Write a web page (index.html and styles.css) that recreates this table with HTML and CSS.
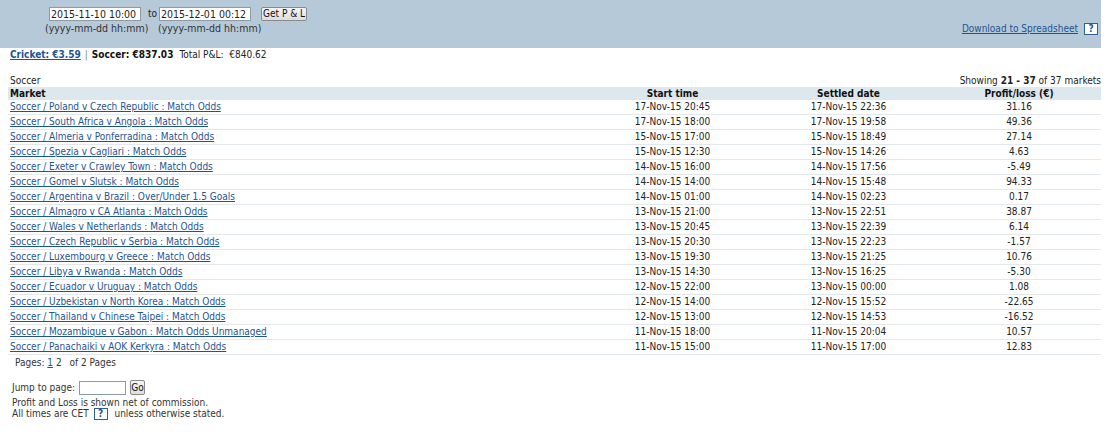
FILE: index.html
```html
<!DOCTYPE html>
<html>
<head>
<meta charset="utf-8">
<link rel="stylesheet" href="styles.css">
</head>
<body>
<div class="page">
  <div class="band">
    <div class="dates">
      <div class="datecol col-from">
        <input class="dt" type="text" value="2015-11-10 10:00">
        <span class="hint">(yyyy-mm-dd hh:mm)</span>
      </div>
      <span class="to">to</span>
      <div class="datecol col-to">
        <input class="dt" type="text" value="2015-12-01 00:12">
        <span class="hint">(yyyy-mm-dd hh:mm)</span>
      </div>
      <button class="btn getpl" type="button">Get P &amp; L</button>
    </div>
    <div class="download">
      <a href="#" class="lnk">Download to Spreadsheet</a>
      <span class="help">?</span>
    </div>
  </div>

  <div class="totals">
    <a href="#" class="lnk strong">Cricket: €3.59</a>
    <span class="sep">|</span>
    <b class="strong">Soccer: €837.03</b>
    <span class="total">Total P&amp;L:&nbsp; €840.62</span>
  </div>

  <div class="caption">
    <span>Soccer</span>
    <span>Showing <b>21 - 37</b> of 37 markets</span>
  </div>

  <table class="grid">
    <colgroup>
      <col class="c-market">
      <col class="c-start">
      <col class="c-settled">
      <col class="c-pl">
    </colgroup>
    <thead>
      <tr>
        <th class="left">Market</th>
        <th>Start time</th>
        <th>Settled date</th>
        <th>Profit/loss (€)</th>
      </tr>
    </thead>
    <tbody>
      <tr><td class="left"><a href="#" class="lnk">Soccer / Poland v Czech Republic : Match Odds</a></td><td>17-Nov-15 20:45</td><td>17-Nov-15 22:36</td><td>31.16</td></tr>
      <tr><td class="left"><a href="#" class="lnk">Soccer / South Africa v Angola : Match Odds</a></td><td>17-Nov-15 18:00</td><td>17-Nov-15 19:58</td><td>49.36</td></tr>
      <tr><td class="left"><a href="#" class="lnk">Soccer / Almeria v Ponferradina : Match Odds</a></td><td>15-Nov-15 17:00</td><td>15-Nov-15 18:49</td><td>27.14</td></tr>
      <tr><td class="left"><a href="#" class="lnk">Soccer / Spezia v Cagliari : Match Odds</a></td><td>15-Nov-15 12:30</td><td>15-Nov-15 14:26</td><td>4.63</td></tr>
      <tr><td class="left"><a href="#" class="lnk">Soccer / Exeter v Crawley Town : Match Odds</a></td><td>14-Nov-15 16:00</td><td>14-Nov-15 17:56</td><td>-5.49</td></tr>
      <tr><td class="left"><a href="#" class="lnk">Soccer / Gomel v Slutsk : Match Odds</a></td><td>14-Nov-15 14:00</td><td>14-Nov-15 15:48</td><td>94.33</td></tr>
      <tr><td class="left"><a href="#" class="lnk">Soccer / Argentina v Brazil : Over/Under 1.5 Goals</a></td><td>14-Nov-15 01:00</td><td>14-Nov-15 02:23</td><td>0.17</td></tr>
      <tr><td class="left"><a href="#" class="lnk">Soccer / Almagro v CA Atlanta : Match Odds</a></td><td>13-Nov-15 21:00</td><td>13-Nov-15 22:51</td><td>38.87</td></tr>
      <tr><td class="left"><a href="#" class="lnk">Soccer / Wales v Netherlands : Match Odds</a></td><td>13-Nov-15 20:45</td><td>13-Nov-15 22:39</td><td>6.14</td></tr>
      <tr><td class="left"><a href="#" class="lnk">Soccer / Czech Republic v Serbia : Match Odds</a></td><td>13-Nov-15 20:30</td><td>13-Nov-15 22:23</td><td>-1.57</td></tr>
      <tr><td class="left"><a href="#" class="lnk">Soccer / Luxembourg v Greece : Match Odds</a></td><td>13-Nov-15 19:30</td><td>13-Nov-15 21:25</td><td>10.76</td></tr>
      <tr><td class="left"><a href="#" class="lnk">Soccer / Libya v Rwanda : Match Odds</a></td><td>13-Nov-15 14:30</td><td>13-Nov-15 16:25</td><td>-5.30</td></tr>
      <tr><td class="left"><a href="#" class="lnk">Soccer / Ecuador v Uruguay : Match Odds</a></td><td>12-Nov-15 22:00</td><td>13-Nov-15 00:00</td><td>1.08</td></tr>
      <tr><td class="left"><a href="#" class="lnk">Soccer / Uzbekistan v North Korea : Match Odds</a></td><td>12-Nov-15 14:00</td><td>12-Nov-15 15:52</td><td>-22.65</td></tr>
      <tr><td class="left"><a href="#" class="lnk">Soccer / Thailand v Chinese Taipei : Match Odds</a></td><td>12-Nov-15 13:00</td><td>12-Nov-15 14:53</td><td>-16.52</td></tr>
      <tr><td class="left"><a href="#" class="lnk">Soccer / Mozambique v Gabon : Match Odds Unmanaged</a></td><td>11-Nov-15 18:00</td><td>11-Nov-15 20:04</td><td>10.57</td></tr>
      <tr><td class="left"><a href="#" class="lnk">Soccer / Panachaiki v AOK Kerkyra : Match Odds</a></td><td>11-Nov-15 15:00</td><td>11-Nov-15 17:00</td><td>12.83</td></tr>
    </tbody>
  </table>

  <div class="pages">
    Pages: <a href="#" class="lnk">1</a> 2 <span class="of">of 2 Pages</span>
  </div>

  <div class="footer">
    <div class="jump">
      <span>Jump to page:</span>
      <input class="pageinput" type="text">
      <button class="btn go" type="button">Go</button>
    </div>
    <div class="net">Profit and Loss is shown net of commission.</div>
    <div class="cet">All times are CET <span class="help">?</span> unless otherwise stated.</div>
  </div>
</div>
</body>
</html>
```

FILE: styles.css
```css
html, body {
  margin: 0;
  padding: 0;
  background: #ffffff;
}

body {
  font-family: "DejaVu Sans Condensed", "DejaVu Sans", sans-serif;
  font-size: 10px;
  color: #222222;
  white-space: nowrap;
}

.page {
  width: 1101px;
}

.lnk {
  color: #1f5493;
  text-decoration: underline;
}

.band {
  height: 48px;
  background: #b5c9d9;
  display: flex;
  justify-content: space-between;
  box-sizing: border-box;
  padding: 7px 3px 0 45px;
}

.dates {
  display: flex;
  align-items: flex-start;
}

.datecol {
  display: flex;
  flex-direction: column;
  align-items: flex-start;
}

.col-from {
  width: 103px;
}

.col-from .dt {
  margin-left: 4px;
}

.col-to {
  width: 100px;
}

.col-to .dt {
  margin-left: 1px;
}

.dt {
  width: 92px;
  height: 14px;
  box-sizing: border-box;
  border: 1px solid #8e9aa6;
  background: #fff;
  padding: 0 1px;
  margin: 0;
  font-family: inherit;
  font-size: 10.5px;
  color: #222;
  line-height: 12px;
}

.hint {
  margin-top: 1px;
  line-height: 13px;
  font-size: 10.5px;
  color: #333;
}

.to {
  line-height: 14px;
  width: 10px;
  margin: 0 0 0 0;
}

.btn {
  height: 14px;
  box-sizing: border-box;
  border: 1px solid #8a8a8a;
  border-radius: 2px;
  background: linear-gradient(#f4f4f4, #dedede);
  font-family: inherit;
  font-size: 10px;
  color: #111;
  padding: 0 1px;
  margin: 0;
  line-height: 12px;
  white-space: nowrap;
}

.getpl {
  margin-left: 3px;
  width: 46px;
}

.download {
  display: flex;
  align-items: center;
  gap: 6px;
  margin-top: 15px;
  height: 13px;
}

.help {
  display: inline-block;
  box-sizing: border-box;
  width: 14px;
  height: 12px;
  border: 1px solid #2f5f94;
  background: #fff;
  color: #1f5493;
  font-weight: bold;
  font-size: 10px;
  line-height: 10px;
  text-align: center;
}

.totals {
  padding: 0 0 0 10px;
  height: 13px;
  line-height: 13px;
  display: flex;
  align-items: center;
  gap: 4px;
}

.strong {
  font-weight: bold;
  color: #111;
}

.totals a.strong {
  color: #1f5493;
}

.sep {
  color: #888;
}

.total {
  margin-left: 2px;
}

.caption {
  display: flex;
  justify-content: space-between;
  margin-top: 14px;
  padding-left: 10px;
  line-height: 12px;
}

.grid {
  margin-left: 8px;
  width: 1093px;
  border-collapse: collapse;
  table-layout: fixed;
}

.c-market { width: 577px; }
.c-start { width: 175px; }
.c-settled { width: 177px; }
.c-pl { width: 164px; }

.grid th {
  background: #dde7ee;
  font-weight: bold;
  color: #111;
  height: 13px;
  padding: 0;
  line-height: 13px;
  text-align: center;
}

.grid td {
  height: 14px;
  padding: 0;
  line-height: 14px;
  text-align: center;
  border-bottom: 1px solid #e3e8ec;
  color: #222;
}

.grid .left {
  text-align: left;
  padding-left: 2px;
}

.pages {
  padding-left: 15px;
  margin-top: 1px;
  line-height: 14px;
  color: #333;
}

.pages .of {
  margin-left: 5px;
}

.footer {
  padding-left: 12px;
  margin-top: 10px;
  line-height: 12px;
  color: #333;
}

.jump {
  display: flex;
  align-items: center;
  gap: 4px;
  height: 15px;
}

.net {
  margin-top: 2px;
  line-height: 11px;
}

.cet {
  line-height: 11px;
}

.pageinput {
  width: 47px;
  height: 14px;
  box-sizing: border-box;
  border: 1px solid #8e9aa6;
  margin: 0;
  padding: 0;
}

.go {
  width: 15px;
  height: 15px;
  padding: 0;
}

.cet .help {
  margin: 0 4px 0 2px;
  vertical-align: middle;
}
```
